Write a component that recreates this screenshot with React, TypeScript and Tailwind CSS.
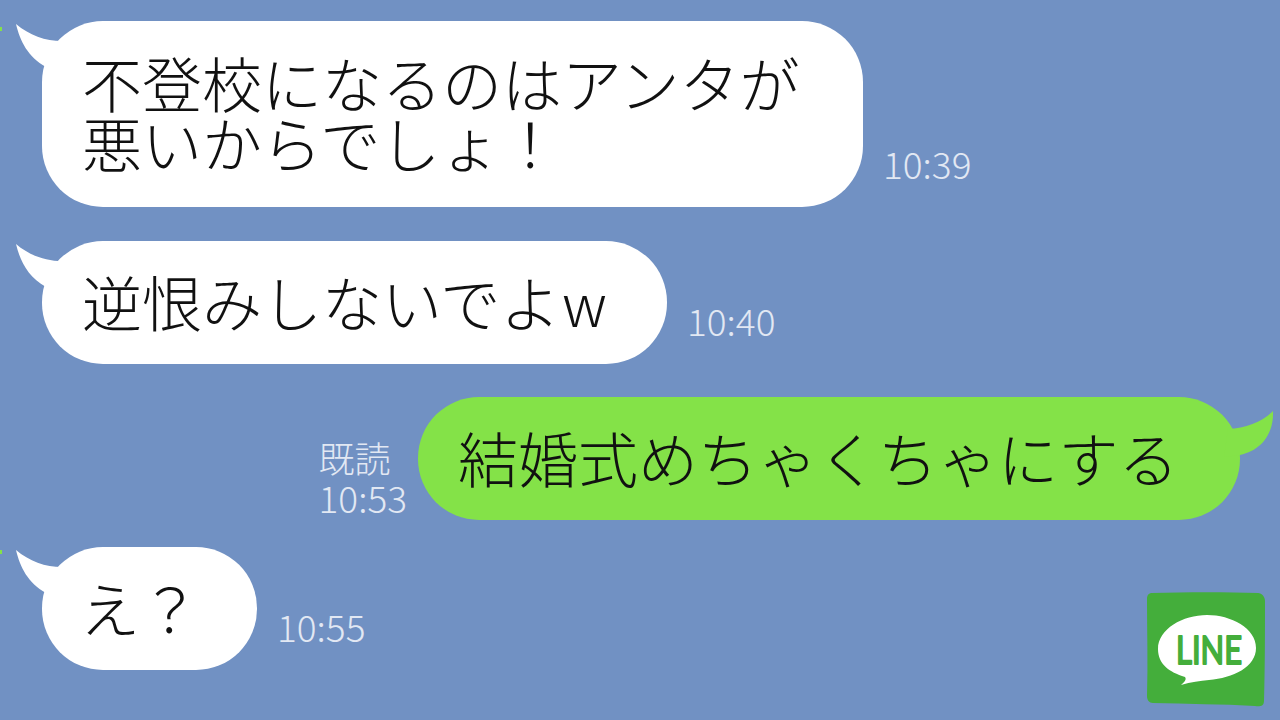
const jp = "font-['Noto_Sans_CJK_JP',sans-serif]";

function LeftTail() {
  return (
    <svg className="absolute left-[-28px] top-0 h-[60px] w-[70px]" viewBox="0 0 70 60">
      <path d="M2 3 C16 15 34 21 52 20 L60 40 L32 46 C14 36 6 20 2 3 Z" fill="#fff" />
    </svg>
  );
}

function Incoming({ children, time, className }: { children: React.ReactNode; time: string; className: string }) {
  return (
    <div className="flex items-end pl-[42px]">
      <div className={`relative rounded-[61px] bg-white text-[#111] ${className}`}>
        <LeftTail />
        <div className="relative">{children}</div>
      </div>
      <span className="ml-5 pb-[24px] text-[37px] leading-[40px] text-[#e2e8f3]">{time}</span>
    </div>
  );
}

function LineLogo() {
  return (
    <svg className="absolute bottom-[13px] right-[15px] h-[115px] w-[118px]" viewBox="0 0 118 115">
      <path
        d="M5 1 C40 0 80 0 111 1 C115 1 118 5 118 9 C118 40 118 75 117 109 C117 114 113 115 108 114 C75 112 40 112 6 111 C2 111 0 108 0 104 C1 72 0 40 0 7 C0 3 2 1 5 1 Z"
        fill="#44ae3b"
      />
      <path
        d="M11 57 C11 37 36 23 60 23 C84 23 109 36 109 56 C109 75 86 86 62 88 C53 89 44 90 34 93 C37 90 40 88 38 85 C22 80 11 72 11 57 Z"
        fill="#fff"
      />
      <text
        x="29"
        y="72"
        textLength="66"
        lengthAdjust="spacingAndGlyphs"
        className="fill-[#44ae3b] stroke-[#44ae3b] stroke-2 font-['Lato',sans-serif] text-[39px] font-normal [stroke-linejoin:round]"
      >
        LINE
      </text>
    </svg>
  );
}

export default function App() {
  return (
    <div className={`relative h-[720px] w-[1280px] overflow-hidden bg-[#7191c3] pt-[21px] ${jp} text-[60px] leading-[60px] font-light`}>
      <span className="absolute left-0 top-[27px] h-1 w-[2px] bg-[#84e248]" />
      <span className="absolute left-0 top-[550px] h-1 w-[2px] bg-[#84e248]" />
      <Incoming time="10:39" className="h-[186px] w-[821px] pl-[40px] pt-[31px]">
        <div>不登校になるのはアンタが</div>
        <div>悪いからでしょ！</div>
      </Incoming>
      <div className="mt-[34px]">
        <Incoming time="10:40" className="h-[123px] w-[625px] pl-[40px] pt-[30px]">
          逆恨みしないでよ<span className="ml-[2px] text-[58px]">w</span>
        </Incoming>
      </div>
      <div className="mt-[33px] flex items-end justify-end pr-[40px]">
        <div className="mr-[11px] flex flex-col pb-[3px] text-[37px] leading-[40px] text-[#e2e8f3]">
          <span className="text-[36px]">既読</span>
          <span>10:53</span>
        </div>
        <div className="relative h-[123px] w-[822px] rounded-[61px] bg-[#84e248] pl-[40px] pt-[30px] text-[#111]">
          <svg className="absolute right-[-34px] top-[10px] h-[50px] w-[70px]" viewBox="0 0 70 50">
            <path d="M69 4 C58 15 42 21 24 22 L20 50 L36 48 C56 44 70 28 69 4 Z" fill="#84e248" />
          </svg>
          <div className="relative">結婚式めちゃくちゃにする</div>
        </div>
      </div>
      <div className="mt-[27px]">
        <Incoming time="10:55" className="h-[123px] w-[215px] pl-[38px] pt-[30px]">
          え？
        </Incoming>
      </div>
      <LineLogo />
    </div>
  );
}
